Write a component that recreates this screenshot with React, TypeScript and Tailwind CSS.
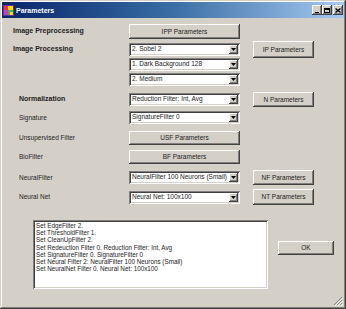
import React from "react";

const font = { fontFamily: '"Liberation Sans", Arial, sans-serif' };

function Btn({ label, w, h }: { label: string; w: string; h: string }) {
  return (
    <div
      className={`${w} ${h} flex items-center justify-center bg-[#d4d0c8] text-[6.5px] text-[#222] shadow-[inset_-1px_-1px_#404040,inset_1px_1px_#ffffff,inset_-2px_-2px_#808080]`}
    >
      {label}
    </div>
  );
}

function Combo({ value }: { value: string }) {
  return (
    <div className="w-[111px] h-[13px] flex items-center bg-white shadow-[inset_1px_1px_#808080,inset_-1px_-1px_#ffffff,inset_2px_2px_#404040,inset_-2px_-2px_#d4d0c8] pl-[3px] pr-[2px]">
      <div className="flex-1 text-[6.5px] text-[#222] whitespace-nowrap overflow-hidden leading-none">{value}</div>
      <div className="w-[9px] h-[9px] flex items-center justify-center bg-[#d4d0c8] shadow-[inset_-1px_-1px_#404040,inset_1px_1px_#ffffff,inset_-2px_-2px_#808080]">
        <svg width="5" height="3" viewBox="0 0 5 3">
          <path d="M0 0h5L2.5 3z" fill="#000" />
        </svg>
      </div>
    </div>
  );
}

function Label({ text, bold, indent }: { text: string; bold?: boolean; indent?: boolean }) {
  return (
    <div className={`w-[127px] ${indent ? "pl-[17px]" : "pl-[11px]"} text-[6.5px] text-[#222] whitespace-nowrap ${bold ? "font-bold text-[7px]" : ""}`}>
      {text}
    </div>
  );
}

export default function App() {
  const lines = [
    "Set EdgeFilter 2.",
    "Set ThresholdFilter 1.",
    "Set CleanUpFilter 2.",
    "Set Redeuction Filter 0. Reduction Filter: Int, Avg",
    "Set SignatureFilter 0. SignatureFilter 0",
    "Set Neural Filter 2: NeuralFilter 100 Neurons (Small)",
    "Set NeuralNet Filter 0. Neural Net: 100x100",
  ];
  return (
    <div
      style={font}
      className="w-[346px] h-[309px] bg-[#d4d0c8] p-[2px] flex flex-col shadow-[inset_-1px_-1px_#404040,inset_1px_1px_#d4d0c8,inset_-2px_-2px_#808080,inset_2px_2px_#ffffff] relative"
    >
      {/* title bar */}
      <div className="h-[16px] flex items-center bg-gradient-to-r from-[#0a246a] via-[#3a6ea5] to-[#a6caf0] px-[1px]">
        <svg width="11" height="11" viewBox="0 0 11 11" className="mr-[2px]">
          <rect x="0" y="0" width="11" height="11" fill="#6a2aa0" />
          <rect x="1" y="1" width="4" height="4" fill="#ff3030" />
          <rect x="5" y="1" width="5" height="4" fill="#ffe000" />
          <rect x="1" y="5" width="4" height="5" fill="#c040c0" />
          <rect x="5" y="5" width="5" height="5" fill="#40c040" />
          <rect x="7" y="7" width="3" height="3" fill="#ffe000" />
        </svg>
        <span className="text-white font-bold text-[7px] leading-none">Parameters</span>
        <div className="flex-1" />
        <div className="flex items-center">
          <div className="w-[10px] h-[10px] bg-[#d4d0c8] shadow-[inset_-1px_-1px_#404040,inset_1px_1px_#ffffff,inset_-2px_-2px_#808080] flex items-end justify-center pb-[2px]">
            <div className="w-[4px] h-[1.5px] bg-black" />
          </div>
          <div className="w-[10px] h-[10px] bg-[#d4d0c8] shadow-[inset_-1px_-1px_#404040,inset_1px_1px_#ffffff,inset_-2px_-2px_#808080] flex items-center justify-center">
            <div className="w-[6px] h-[5px] border border-black border-t-2" />
          </div>
          <div className="w-[10px] h-[10px] ml-[1px] bg-[#d4d0c8] shadow-[inset_-1px_-1px_#404040,inset_1px_1px_#ffffff,inset_-2px_-2px_#808080] flex items-center justify-center">
            <svg width="6" height="5" viewBox="0 0 6 5">
              <path d="M0.5 0.5L5.5 4.5M5.5 0.5L0.5 4.5" stroke="#000" strokeWidth="1.3" />
            </svg>
          </div>
        </div>
      </div>

      {/* row 1 */}
      <div className="flex items-center h-[15px] mt-[6px]">
        <Label text="Image Preprocessing" bold />
        <Btn label="IPP Parameters" w="w-[111px]" h="h-[15px]" />
      </div>
      {/* row 2 */}
      <div className="flex items-center h-[17px] mt-[2px]">
        <Label text="Image Processing" bold />
        <Combo value="2. Sobel 2" />
        <div className="w-[13px]" />
        <Btn label="IP Parameters" w="w-[61px]" h="h-[17px]" />
      </div>
      {/* row 3 */}
      <div className="flex items-center h-[13px]">
        <div className="w-[127px]" />
        <Combo value="1. Dark Background 128" />
      </div>
      {/* row 4 */}
      <div className="flex items-center h-[13px] mt-[2px]">
        <div className="w-[127px]" />
        <Combo value="2. Medium" />
      </div>
      {/* row 5 */}
      <div className="flex items-center h-[15px] mt-[6px]">
        <Label text="Normalization" bold indent />
        <Combo value="Reduction Filter: Int, Avg" />
        <div className="w-[13px]" />
        <Btn label="N Parameters" w="w-[61px]" h="h-[15px]" />
      </div>
      {/* row 6 */}
      <div className="flex items-center h-[13px] mt-[4px]">
        <Label text="Signature" indent />
        <Combo value="SignatureFilter 0" />
      </div>
      {/* row 7 */}
      <div className="flex items-center h-[14px] mt-[7px]">
        <Label text="Unsupervised Filter" indent />
        <Btn label="USF Parameters" w="w-[111px]" h="h-[14px]" />
      </div>
      {/* row 8 */}
      <div className="flex items-center h-[14px] mt-[5px]">
        <Label text="BioFilter" indent />
        <Btn label="BF Parameters" w="w-[111px]" h="h-[14px]" />
      </div>
      {/* row 9 */}
      <div className="flex items-center h-[15px] mt-[6px]">
        <Label text="NeuralFilter" indent />
        <Combo value="NeuralFilter 100 Neurons (Small)" />
        <div className="w-[13px]" />
        <Btn label="NF Parameters" w="w-[61px]" h="h-[15px]" />
      </div>
      {/* row 10 */}
      <div className="flex items-center h-[16px] mt-[4px]">
        <Label text="Neural Net" indent />
        <Combo value="Neural Net: 100x100" />
        <div className="w-[13px]" />
        <Btn label="NT Parameters" w="w-[61px]" h="h-[16px]" />
      </div>
      {/* row 11 */}
      <div className="flex mt-[15px]">
        <div className="w-[31px]" />
        <div className="w-[235px] h-[69px] bg-white shadow-[inset_1px_1px_#808080,inset_-1px_-1px_#ffffff,inset_2px_2px_#404040,inset_-2px_-2px_#d4d0c8] pl-[3px] pt-[2px]">
          {lines.map((l) => (
            <div key={l} className="text-[6.3px] leading-[7.2px] text-[#222] whitespace-nowrap">
              {l}
            </div>
          ))}
        </div>
        <div className="w-[10px]" />
        <div className="mt-[21px]">
          <Btn label="OK" w="w-[56px]" h="h-[14px]" />
        </div>
      </div>

      {/* size grip */}
      <svg width="10" height="10" viewBox="0 0 10 10" className="absolute right-[3px] bottom-[3px]">
        <path d="M9 1L1 9M9 4L4 9M9 7L7 9" stroke="#808080" strokeWidth="1" />
        <path d="M10 2L2 10M10 5L5 10M10 8L8 10" stroke="#ffffff" strokeWidth="1" />
      </svg>
    </div>
  );
}
